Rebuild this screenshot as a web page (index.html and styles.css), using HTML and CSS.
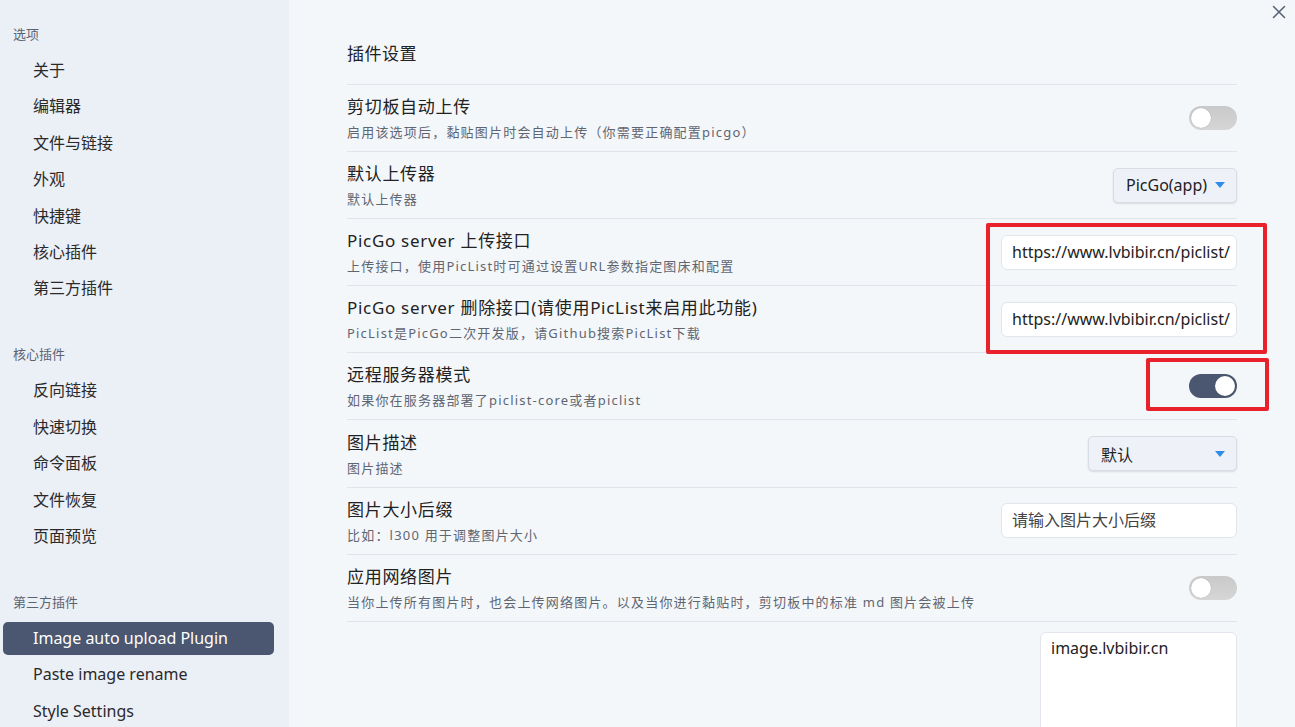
FILE: index.html
```html
<!DOCTYPE html>
<html lang="zh">
<head>
<meta charset="utf-8">
<title>设置</title>
<link rel="stylesheet" href="styles.css">
</head>
<body>
<div class="app">
  <aside class="sidebar">
    <div class="group">
      <div class="group-title">选项</div>
      <div class="nav-item">关于</div>
      <div class="nav-item">编辑器</div>
      <div class="nav-item">文件与链接</div>
      <div class="nav-item">外观</div>
      <div class="nav-item">快捷键</div>
      <div class="nav-item">核心插件</div>
      <div class="nav-item">第三方插件</div>
    </div>
    <div class="group">
      <div class="group-title">核心插件</div>
      <div class="nav-item">反向链接</div>
      <div class="nav-item">快速切换</div>
      <div class="nav-item">命令面板</div>
      <div class="nav-item">文件恢复</div>
      <div class="nav-item">页面预览</div>
    </div>
    <div class="group">
      <div class="group-title">第三方插件</div>
      <div class="nav-item active">Image auto upload Plugin</div>
      <div class="nav-item">Paste image rename</div>
      <div class="nav-item">Style Settings</div>
    </div>
  </aside>
  <main class="main">
    <div class="close">
      <svg width="14" height="14" viewBox="0 0 14 14"><path d="M1.5 1.5 L12.5 12.5 M12.5 1.5 L1.5 12.5" stroke="#5a6274" stroke-width="1.6" stroke-linecap="round"/></svg>
    </div>
    <h2 class="heading">插件设置</h2>
    <div class="setting">
      <div class="info">
        <div class="name">剪切板自动上传</div>
        <div class="desc">启用该选项后，黏贴图片时会自动上传（你需要正确配置picgo）</div>
      </div>
      <div class="toggle"></div>
    </div>
    <div class="setting">
      <div class="info">
        <div class="name">默认上传器</div>
        <div class="desc">默认上传器</div>
      </div>
      <div class="select">PicGo(app)<span class="caret"></span></div>
    </div>
    <div class="setting">
      <div class="info">
        <div class="name">PicGo server 上传接口</div>
        <div class="desc">上传接口，使用PicList时可通过设置URL参数指定图床和配置</div>
      </div>
      <div class="input">https://www.lvbibir.cn/piclist/</div>
    </div>
    <div class="setting">
      <div class="info">
        <div class="name">PicGo server 删除接口(请使用PicList来启用此功能)</div>
        <div class="desc">PicList是PicGo二次开发版，请Github搜索PicList下载</div>
      </div>
      <div class="input">https://www.lvbibir.cn/piclist/</div>
    </div>
    <div class="setting">
      <div class="info">
        <div class="name">远程服务器模式</div>
        <div class="desc">如果你在服务器部署了piclist-core或者piclist</div>
      </div>
      <div class="toggle on"></div>
    </div>
    <div class="setting">
      <div class="info">
        <div class="name">图片描述</div>
        <div class="desc">图片描述</div>
      </div>
      <div class="select wide">默认<span class="caret"></span></div>
    </div>
    <div class="setting">
      <div class="info">
        <div class="name">图片大小后缀</div>
        <div class="desc">比如：l300 用于调整图片大小</div>
      </div>
      <div class="input placeholder">请输入图片大小后缀</div>
    </div>
    <div class="setting">
      <div class="info">
        <div class="name">应用网络图片</div>
        <div class="desc">当你上传所有图片时，也会上传网络图片。以及当你进行黏贴时，剪切板中的标准 md 图片会被上传</div>
      </div>
      <div class="toggle"></div>
    </div>
    <div class="setting top">
      <div class="info"></div>
      <div class="textarea">image.lvbibir.cn</div>
    </div>
    <div class="mark mark-inputs"></div>
    <div class="mark mark-toggle"></div>
  </main>
</div>
</body>
</html>
```

FILE: styles.css
```css
* { box-sizing: border-box; }
html, body { margin: 0; padding: 0; height: 100%; overflow: hidden; }
body {
  font-family: "Noto Sans", "Noto Sans CJK SC", sans-serif;
  color: #222;
  background: #f4f7fa;
}
.app { display: flex; height: 727px; }
.sidebar {
  width: 289px;
  flex: none;
  background: #ebeff6;
  padding: 24px 15px 0 3px;
}
.group + .group { margin-top: 39px; }
.group-title {
  font-size: 13px;
  line-height: 20px;
  color: #5c6370;
  padding-left: 10px;
  margin-bottom: 10px;
}
.nav-item {
  height: 33px;
  line-height: 33px;
  padding-left: 30px;
  font-size: 16px;
  color: #2a2a2a;
  margin-bottom: 3.4px;
  border-radius: 5px;
  white-space: nowrap;
}
.nav-item.active { background: #4b5670; color: #fff; }

.main {
  flex: 1;
  position: relative;
  padding: 42px 58px 0 58px;
}
.close { position: absolute; right: 9px; top: 2px; }
.heading {
  margin: 0 0 18px 0;
  font-size: 17px;
  font-weight: normal;
  line-height: 24px;
  letter-spacing: 0.5px;
}
.setting {
  display: flex;
  align-items: center;
  justify-content: space-between;
  border-top: 1px solid #e1e5eb;
  padding: 9px 0;
  min-height: 67.1px;
}
.setting.top { align-items: flex-start; padding-top: 10px; }
.info { flex: 1; min-width: 0; }
.name {
  font-size: 17px;
  line-height: 24px;
  padding-top: 1px;
  letter-spacing: 0.7px;
  color: #222;
}
.desc {
  margin-top: 3px;
  font-size: 13px;
  line-height: 20px;
  letter-spacing: 1.2px;
  color: #5f6672;
}
.toggle {
  position: relative;
  width: 48px;
  height: 24px;
  border-radius: 12px;
  background: linear-gradient(#c9c9c9, #d6d6d6);
  flex: none;
}
.toggle::after {
  content: "";
  position: absolute;
  left: 2px;
  top: 2px;
  width: 20px;
  height: 20px;
  border-radius: 50%;
  background: #fff;
  box-shadow: 0 0 1px rgba(0,0,0,.3);
}
.toggle.on { background: #4b5670; }
.toggle.on::after { left: 26px; }
.select {
  display: flex;
  align-items: center;
  justify-content: space-between;
  height: 35px;
  width: 124px;
  padding: 0 11px 0 12px;
  background: #eef2f8;
  border: 1px solid #d9dee6;
  border-radius: 5px;
  box-shadow: 0 1px 2px rgba(0,0,0,.12);
  font-size: 16px;
  color: #222;
  flex: none;
}
.select.wide { width: 149px; }
.caret {
  width: 0; height: 0;
  border-left: 5px solid transparent;
  border-right: 5px solid transparent;
  border-top: 6px solid #2f8ce8;
}
.input {
  width: 236px;
  height: 35px;
  line-height: 33px;
  padding: 0 10px;
  background: #fff;
  border: 1px solid #e2e6ec;
  border-radius: 6px;
  font-size: 16px;
  color: #222;
  white-space: nowrap;
  overflow: hidden;
  flex: none;
}
.input.placeholder { color: #444; }
.textarea {
  width: 197px;
  height: 150px;
  padding: 4px 10px;
  background: #fff;
  border: 1px solid #e2e6ec;
  border-radius: 6px;
  font-size: 16px;
  line-height: 22px;
  color: #222;
  flex: none;
}
.mark {
  position: absolute;
  border: 4px solid #e8212b;
  border-radius: 2px;
}
.mark-inputs { left: 697px; top: 223px; width: 281px; height: 131px; }
.mark-toggle { left: 857px; top: 358px; width: 123px; height: 53px; }
```
